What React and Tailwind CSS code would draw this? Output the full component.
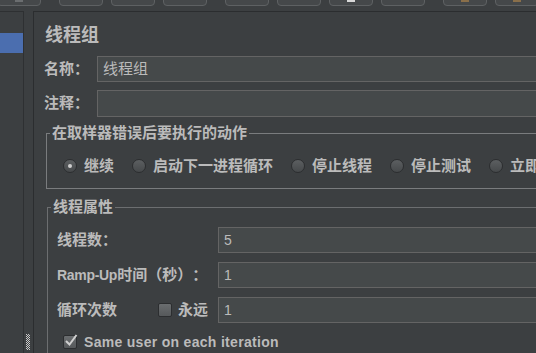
import React from 'react'

const labelFont = "font-['Liberation_Sans','Noto_Sans_CJK_SC',sans-serif]"

function ToolButton({ bit }) {
  return (
    <div className="flex h-[20px] w-[44px] items-end justify-center rounded-[4px] border border-[#5e6163] bg-[#45484a] pb-[3px]">
      {bit && <span className={`h-[2px] w-[8px] ${bit}`} />}
    </div>
  )
}

function Radio({ checked, label }) {
  return (
    <div className="flex items-center gap-[7px]">
      <span className="flex h-[14px] w-[14px] items-center justify-center rounded-full border border-[#2c2e30] bg-linear-to-b from-[#5c5f61] to-[#46494b]">
        {checked && <span className="h-[4px] w-[4px] rounded-full bg-[#cfcfcf]" />}
      </span>
      <span className="leading-[20px]">{label}</span>
    </div>
  )
}

function Checkbox({ checked }) {
  return (
    <span className="relative flex h-[14px] w-[14px] shrink-0 items-center justify-center rounded-[2px] border border-[#2c2e30] bg-linear-to-b from-[#6a6d6f] to-[#56595b]">
      {checked && (
        <svg width="14" height="14" viewBox="0 0 14 14" className="absolute -top-[3px] left-[0px]">
          <path d="M2 8 L5.5 11.5 L12.5 2" fill="none" stroke="#d0d0d0" strokeWidth="2" />
        </svg>
      )}
    </span>
  )
}

function Field({ value, tall }) {
  return (
    <div
      className={`flex flex-1 items-center border border-[#646464] bg-[#45494a] pl-[5px] text-[15px] font-normal text-[#bbbbbb] ${
        tall ? 'h-[27px]' : 'h-[26px]'
      }`}
    >
      {value}
    </div>
  )
}

function Grip() {
  const dots = []
  for (let y = 0; y < 16; y++) {
    const x = y % 2 === 0 ? 0 : 1
    dots.push(<rect key={`a${y}`} x={x} y={y} width="1" height="1" fill="#c8c8c8" />)
    dots.push(<rect key={`b${y}`} x={x + 2} y={y} width="1" height="1" fill="#c8c8c8" />)
  }
  return (
    <svg width="5" height="16" viewBox="0 0 5 16" shapeRendering="crispEdges">
      {dots}
    </svg>
  )
}

export default function App() {
  return (
    <div
      className={`flex h-[353px] w-[536px] flex-col overflow-hidden bg-[#3c3f41] text-[#bbbbbb] [text-spacing-trim:space-all] ${labelFont}`}
    >
      {/* Toolbar (cut off at top) */}
      <div className="flex h-[11px] shrink-0 items-start gap-[18px] -ml-[3px]">
        <div className="-mt-[14px] flex">
          <ToolButton bit="bg-[#6b6e70]" />
        </div>
        <div className="-mt-[14px] flex gap-[8px]">
          <ToolButton />
          <ToolButton />
          <ToolButton />
        </div>
        <div className="-mt-[14px] flex gap-[8px]">
          <ToolButton />
          <ToolButton />
          <ToolButton bit="bg-[#d8d8d8]" />
          <ToolButton />
        </div>
        <div className="-mt-[14px] flex gap-[8px]">
          <ToolButton bit="bg-[#8a6f4a]" />
          <ToolButton bit="bg-[#8a6f4a]" />
        </div>
      </div>

      <div className="flex min-h-0 flex-1">
        {/* Tree panel */}
        <div className="w-[24px] shrink-0 border-t border-r border-[#2e3032]">
          <div className="mt-[21px] h-[20px] bg-[#4b6eaf]" />
        </div>

        {/* Splitter */}
        <div className="flex w-[9px] shrink-0 flex-col items-center justify-end pb-[3px]">
          <Grip />
        </div>

        {/* Editor */}
        <div className="min-w-0 flex-1 overflow-hidden border-t border-l border-[#2b2d2f]">
          <div className="w-[620px] pl-[10px]">
            <div className="ml-[1px] mt-[12px] text-[18px] font-bold leading-[22px]">线程组</div>

            <div className="mt-[10px] flex items-center text-[15px] font-bold">
              <span className="w-[53px]">名称：</span>
              <Field value="线程组" />
            </div>
            <div className="mt-[8px] flex items-center text-[15px] font-bold">
              <span className="w-[53px]">注释：</span>
              <Field tall />
            </div>

            <fieldset className="ml-[2px] mt-[8px] border border-[#7a7c7e] pb-[12px] text-[15px] font-bold">
              <legend className="ml-[3px] px-[2px] leading-[16px]">在取样器错误后要执行的动作</legend>
              <div className="mt-[15px] flex h-[20px] items-center gap-[18px] pl-[16px] whitespace-nowrap">
                <Radio checked label="继续" />
                <Radio label="启动下一进程循环" />
                <Radio label="停止线程" />
                <Radio label="停止测试" />
                <Radio label="立即停止测试" />
              </div>
            </fieldset>

            <fieldset className="ml-[3px] mt-[10px] border border-[#6c6e70] text-[15px] font-bold">
              <legend className="ml-[3px] px-[2px] leading-[16px]">线程属性</legend>
              <div className="flex flex-col gap-[9px] pl-[9px] pt-[12px]">
                <div className="flex items-center">
                  <span className="w-[161px]">线程数：</span>
                  <Field value={<span className="text-[14px]">5</span>} />
                </div>
                <div className="flex items-center">
                  <span className="w-[161px] whitespace-nowrap">
                    <span className="text-[14px] tracking-[-0.3px]">Ramp-Up</span>时间（秒）：
                  </span>
                  <Field value={<span className="text-[14px]">1</span>} />
                </div>
                <div className="flex items-center">
                  <div className="flex w-[161px] items-center">
                    <span className="w-[101px]">循环次数</span>
                    <Checkbox />
                    <span className="ml-[6px]">永远</span>
                  </div>
                  <Field value={<span className="text-[14px]">1</span>} />
                </div>
                <div className="flex h-[20px] items-center gap-[7px] pl-[6px]">
                  <Checkbox checked />
                  <span className="text-[14px] tracking-[0.3px]">Same user on each iteration</span>
                </div>
                <div className="h-[40px]" />
              </div>
            </fieldset>
          </div>
        </div>
      </div>
    </div>
  )
}
